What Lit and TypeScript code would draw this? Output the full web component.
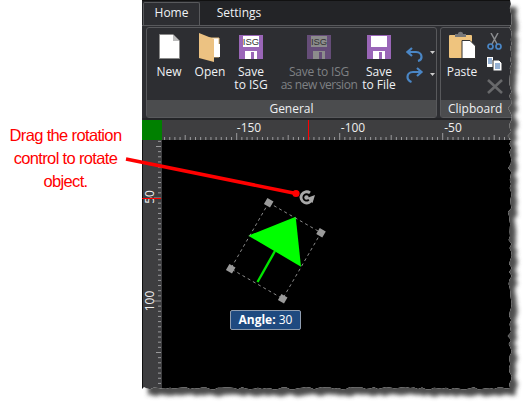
import { LitElement, html, css, svg } from "lit";
import { customElement } from "lit/decorators.js";

const range = (a: number, b: number) => Array.from({ length: b - a }, (_, i) => a + i);

function tornPoints() {
  let s = 7;
  const r = () => { s = (s * 16807) % 2147483647; return (s % 1000) / 1000; };
  const pts: string[] = ["142,0", "510,0"];
  for (let y = 4; y < 386; y += 4) pts.push(`${(509 + r() * 3 - (r() > 0.85 ? 2 : 0)).toFixed(1)},${y}`);
  pts.push("510,388");
  for (let x = 506; x > 146; x -= 4) pts.push(`${x},${(387 + r() * 2.6).toFixed(1)}`);
  pts.push("146,388", "144,387", "142,389");
  return pts;
}

const disk = (fill: string, top: string, label: boolean) => html`
  <svg class="ico" width="24" height="24" viewBox="0 0 24 24">
    <path d="M0 0H24V24H0Z" fill=${fill} />
    <rect x="4" y="1" width="16" height="11" fill=${top} />
    <rect x="6" y="16" width="12" height="8" fill=${top} />
    <rect x="12" y="17" width="3" height="7" fill=${fill} />
    ${label ? svg`<text x="12" y="10" text-anchor="middle" font-family="Liberation Sans, sans-serif" font-size="9.5" fill="#333">ISG</text>` : ""}
  </svg>`;

@customElement("app-root")
export class AppRoot extends LitElement {
  static styles = css`
    :host { display: block; width: 528px; height: 408px; position: relative; background: #fff; overflow: hidden; }
    .callout { position: absolute; left: 0; top: 124px; width: 131px; text-align: center; color: #f00; font: 16.5px/23px "Liberation Sans", Arial, sans-serif; letter-spacing: -0.65px; }
    .win { position: absolute; left: 142px; top: 0; width: 386px; height: 408px; background: #232427; display: flex; flex-direction: column; font-family: "Open Sans", "Noto Sans", sans-serif; color: #f0f2f5; font-size: 12px; }
    .tabs { height: 25px; display: flex; padding-top: 1px; box-sizing: border-box; flex: none; border-top: 1px solid #111; }
    .tab { width: 57px; margin-left: 1px; text-align: center; line-height: 20px; box-sizing: border-box; }
    .tab.on { background: #2d2e32; border: 1px solid #58595c; border-bottom: none; border-radius: 2px 2px 0 0; }
    .tab.off { margin-left: 4px; width: 70px; padding-top: 1px; }
    .ribbon { flex: none; height: 93px; background: #2d2e32; border-top: 1px solid #58595c; display: flex; gap: 3px; padding: 1px 0 0 4px; box-sizing: border-box; }
    .group { height: 91px; border: 1px solid #58595c; border-radius: 3px; box-sizing: border-box; display: flex; flex-direction: column; }
    .group.gen { width: 292px; }
    .group.clip { width: 90px; }
    .btns { flex: 1; display: flex; padding: 3px 0 0 1px; min-height: 0; }
    .foot { height: 17px; flex: none; background: #4b4c4e; text-align: center; line-height: 18px; color: #eef0f2; }
    .clip .foot { text-align: left; padding-left: 7px; }
    .btn { display: flex; flex-direction: column; align-items: center; line-height: 13px; text-align: center; flex: none; white-space: nowrap; }
    .ico-box { height: 28px; display: flex; align-items: flex-end; justify-content: center; margin-bottom: 6px; }
    .ico { display: block; }
    .folder { margin-bottom: -3px; }
    .dim { color: #7f8184; letter-spacing: -0.2px; }
    .tight { letter-spacing: -0.45px; }
    .w42 { width: 42px; } .w40 { width: 40px; } .w74 { width: 74px; margin-left: 10px; } .w46 { width: 46px; }
    .hist { width: 34px; display: flex; flex-direction: column; gap: 5px; padding: 15px 0 0 4px; box-sizing: border-box; }
    .small { display: flex; flex-direction: column; gap: 6px; padding: 2px 0 0 5px; }
    .del { margin-top: 2px; }
    .canvas { flex: 1; display: grid; grid-template-columns: 20px 1fr; grid-template-rows: 20px 1fr; margin-top: 2px; min-height: 0; }
    .green { background: #008000; }
    .rh, .rv { background: #3e3e40; display: block; }
    .stage { background: #000; }
    .overlay { position: absolute; left: 0; top: 0; pointer-events: none; }
    .angle { position: absolute; left: 230px; top: 310px; width: 71px; height: 20px; box-sizing: border-box; background: #1f4a80; border: 1px solid #8f9db0; border-radius: 2px; color: #fff; font: 12px/18px "Open Sans", sans-serif; text-align: center; white-space: nowrap; }
    .angle b { font-weight: 700; }
  `;

  private rulerH() {
    const ticks = range(-14, 60).map((k) => {
      const x = 74.7 + k * 5.15;
      const h = k % 20 === 0 ? 7 : k % 10 === 0 ? 5 : 3;
      return svg`<line x1=${x} x2=${x} y1=${20 - h} y2="20" stroke="#9a9a9c" />`;
    });
    const lab = (x: number, t: string) => svg`<text x=${x} y="11.5" text-anchor="middle" fill="#eee" font-size="12" font-family="Open Sans, sans-serif">${t}</text>`;
    return svg`<svg class="rh" width="366" height="20" viewBox="0 0 366 20">
      ${ticks}
      ${lab(87, "-150")}${lab(191, "-100")}${lab(291, "-50")}
      <line x1="146.5" x2="146.5" y1="0" y2="20" stroke="#f00" />
    </svg>`;
  }

  private rulerV() {
    const ticks = range(-11, 45).map((k) => {
      const y = 58 + k * 5.15;
      const w = k % 20 === 0 ? 7 : k % 10 === 0 ? 5 : 3;
      return svg`<line x1=${19 - w} x2="19" y1=${y} y2=${y} stroke="#9a9a9c" />`;
    });
    const lab = (y: number, t: string) => svg`<text transform="translate(11.5 ${y}) rotate(-90)" text-anchor="middle" fill="#eee" font-size="12" font-family="Open Sans, sans-serif">${t}</text>`;
    return svg`<svg class="rv" width="20" height="268" viewBox="0 0 20 268">
      <line x1="0.5" x2="0.5" y1="0" y2="268" stroke="#111" />
      ${ticks}
      ${lab(57, "50")}${lab(161, "100")}
      <line x1="0" x2="19" y1="58.5" y2="58.5" stroke="#f00" />
    </svg>`;
  }

  render() {
    const pts = tornPoints().join(" ");
    const outer = `M142 0H528V408H142ZM${pts.replace(/ /g, "L")}Z`;
    const handles = [[268.7, 202.7], [321, 232.7], [282.7, 298.7], [230.7, 268.7]];
    return html`
      <div class="callout">Drag the rotation<br />control to rotate<br />object.</div>
      <div class="win">
        <div class="tabs"><div class="tab on">Home</div><div class="tab off">Settings</div></div>
        <div class="ribbon">
          <div class="group gen">
            <div class="btns">
              <div class="btn w42"><div class="ico-box">
                <svg class="ico" width="21" height="25" viewBox="0 0 21 25"><path d="M.5.5H14L20.5 7V24.5H.5Z" fill="#fff" stroke="#8a8a8a" /><path d="M14 .5V7H20.5Z" fill="#bbb" /></svg>
              </div>New</div>
              <div class="btn w40"><div class="ico-box">
                <svg class="ico folder" width="22" height="29" viewBox="0 0 22 29"><path d="M4 5H20V24H4Z" fill="#fff" stroke="#e6bf82" /><path d="M0 0 15 6V29L0 25Z" fill="#ecc282" /><path d="M15 11 21 11V24H15Z" fill="#fff" /></svg>
              </div>Open</div>
              <div class="btn w42"><div class="ico-box">${disk("#9a66b8", "#fff", true)}</div>Save<br />to ISG</div>
              <div class="btn w74 dim"><div class="ico-box">${disk("#654d78", "#8c8c8c", true)}</div>Save to ISG<br /><span class="tight">as new version</span></div>
              <div class="btn w46"><div class="ico-box">${disk("#9a66b8", "#fff", false)}</div>Save<br />to File</div>
              <div class="hist">
                <svg class="ico" width="30" height="16" viewBox="0 0 30 16"><path d="M6 2 1.5 6 6 10M2 6H10C14 6 15.5 9 15.5 11S14 14.5 12 15" fill="none" stroke="#4a86c5" stroke-width="2.2" /><path d="M24 5h5l-2.5 3Z" fill="#ccc" /></svg>
                <svg class="ico" width="30" height="16" viewBox="0 0 30 16"><path d="M11 1 15.5 5 11 9M15 5H7C3 5 1.5 8 1.5 10S3 14 5.5 15" fill="none" stroke="#4a86c5" stroke-width="2.2" /><path d="M24 6h5l-2.5 3Z" fill="#ccc" /></svg>
              </div>
            </div>
            <div class="foot">General</div>
          </div>
          <div class="group clip">
            <div class="btns">
              <div class="btn w40"><div class="ico-box">
                <svg class="ico" width="27" height="28" viewBox="0 0 27 28"><rect x="0" y="4" width="23" height="23" rx="1" fill="#efc47e" /><path d="M6 6V3H9C9 0 14 0 14 3H17V6Z" fill="#77787a" /><path d="M13 9.5H21L26.5 15V27.5H13Z" fill="#fff" stroke="#333" /></svg>
              </div>Paste</div>
              <div class="small">
                <svg class="ico" width="15" height="17" viewBox="0 0 15 17"><path d="M4 0 10 11M11 0 5 11" stroke="#8b8d90" stroke-width="1.5" fill="none" /><circle cx="3.5" cy="13.5" r="2.5" fill="none" stroke="#4a86c5" stroke-width="1.7" /><circle cx="11.5" cy="13.5" r="2.5" fill="none" stroke="#4a86c5" stroke-width="1.7" /></svg>
                <svg class="ico" width="15" height="15" viewBox="0 0 15 15"><path d="M0 1H6V11H0Z" fill="#fff" /><path d="M1 3H5M1 5H5M1 7H5" stroke="#2a62a8" /><path d="M6 4H12L15 7V15H6Z" fill="#fff" stroke="#2d2e32" /><path d="M8 8H13M8 10H13M8 12H13" stroke="#2a62a8" /></svg>
                <svg class="ico del" width="16" height="15" viewBox="0 0 16 15"><path d="M1 1 15 14M15 1 1 14" stroke="#68696b" stroke-width="2.6" /></svg>
              </div>
            </div>
            <div class="foot">Clipboard</div>
          </div>
        </div>
        <div class="canvas">
          <div class="green"></div>
          ${this.rulerH()}
          ${this.rulerV()}
          <div class="stage"></div>
        </div>
      </div>
      <svg class="overlay" width="528" height="408" viewBox="0 0 528 408">
        <polygon points="248.3,235.7 295.7,216.7 301,266.7" fill="#00ff00" />
        <line x1="275" y1="251" x2="257.5" y2="282" stroke="#00e600" stroke-width="2.4" />
        <polygon points="268.7,202.7 321,232.7 282.7,298.7 230.7,268.7" fill="none" stroke="#8a8a8a" stroke-dasharray="3 3" />
        ${handles.map(([x, y]) => svg`<rect x=${x - 3.5} y=${y - 3.5} width="7" height="7" fill="#9a9a9a" transform="rotate(30 ${x} ${y})" />`)}
        <path d="M310 192.9A5.6 5.6 0 1 0 312 199" fill="none" stroke="#a8a8a8" stroke-width="2.8" />
        <circle cx="306.5" cy="197.5" r="2.2" fill="#a8a8a8" />
        <path d="M307 198 315 195 312.5 203Z" fill="#a8a8a8" />
        <line x1="126" y1="159" x2="296" y2="193.5" stroke="#f00" stroke-width="3.6" />
        <circle cx="296" cy="193.5" r="3.6" fill="#f00" />
      </svg>
      <div class="angle"><b>Angle:</b> 30</div>
      <svg class="overlay" width="528" height="408" viewBox="0 0 528 408">
        <defs>
          <filter id="blur" x="-5%" y="-5%" width="110%" height="110%"><feGaussianBlur stdDeviation="2" /></filter>
          <clipPath id="out"><path clip-rule="evenodd" d=${outer} /></clipPath>
        </defs>
        <path fill-rule="evenodd" fill="#fff" d=${outer} />
        <g clip-path="url(#out)">
          <polygon points=${pts} fill="#4d4d4d" filter="url(#blur)" transform="translate(6 7)" />
        </g>
      </svg>
    `;
  }
}
